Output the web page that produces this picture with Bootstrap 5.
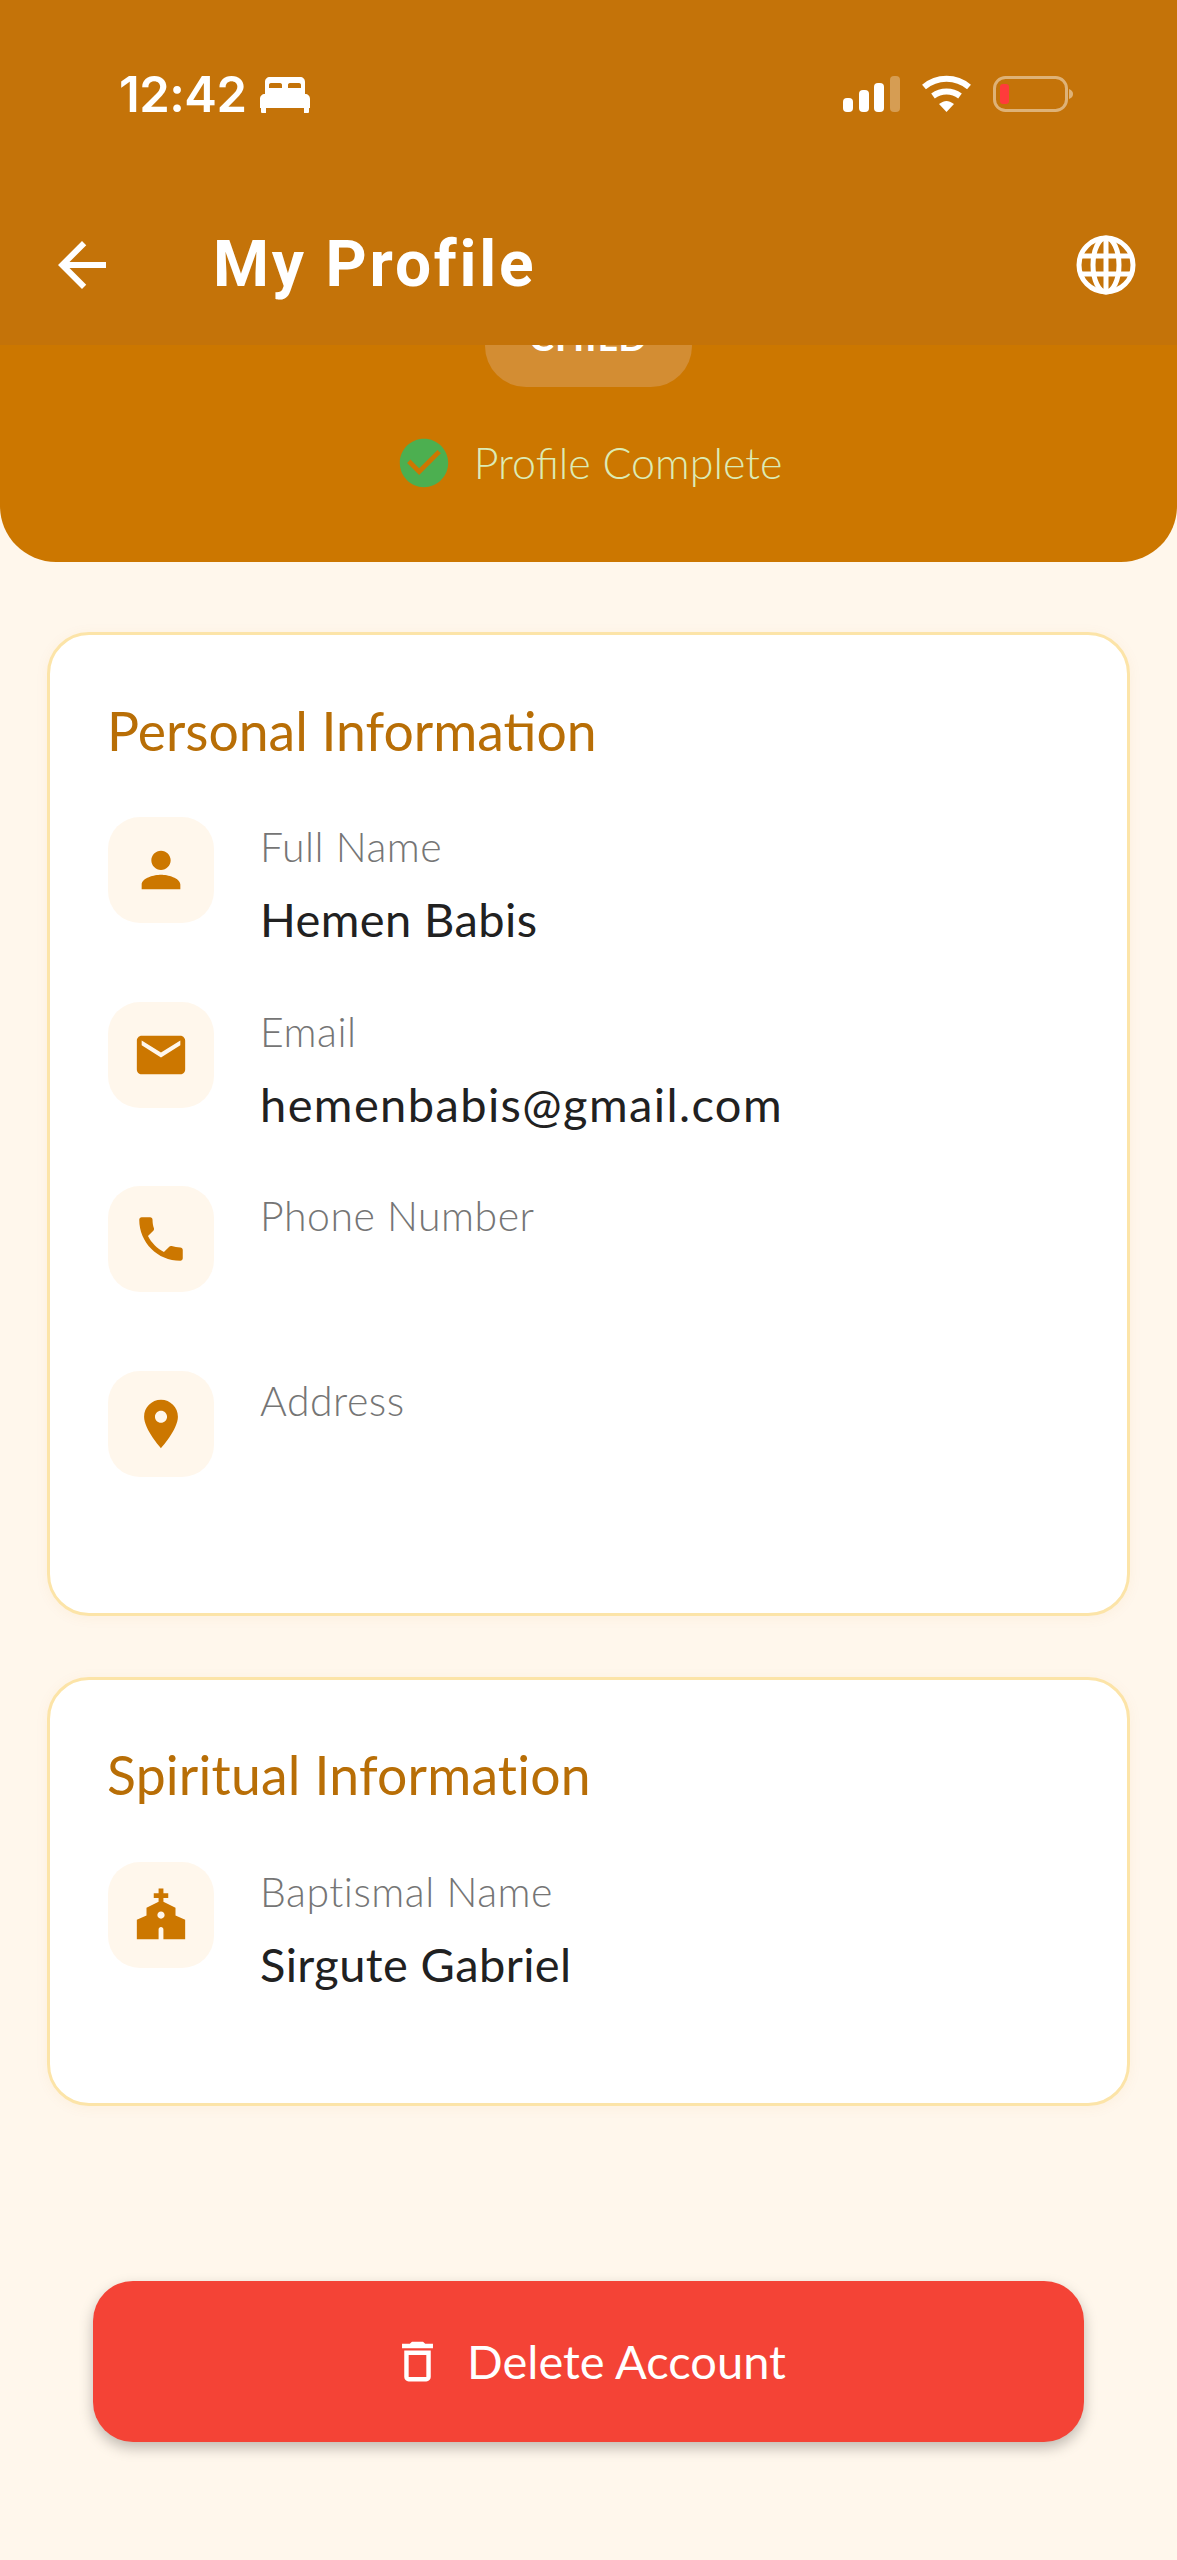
<!DOCTYPE html>
<html lang="en">
<head>
  <meta charset="UTF-8" />
  <meta name="viewport" content="width=device-width, initial-scale=1" />
  <title>My Profile</title>
  <link href="https://cdn.jsdelivr.net/npm/bootstrap@5.3.0/dist/css/bootstrap.min.css" rel="stylesheet" />
  <style>
    body {
      background: #fff7ec;
      font-family: "Lato", "Liberation Sans", sans-serif;
      width: 1177px;
      height: 2560px;
      overflow: hidden;
    }
    .top-bar {
      background: #c47309;
      height: 345px;
      color: #fff;
    }
    .status-row {
      height: 190px;
      padding: 65px 104px 0 119px;
    }
    .clock {
      font-family: "Inter", sans-serif;
      font-size: 49px;
      font-weight: 600;
      line-height: 60px;
      letter-spacing: -0.5px;
    }
    .bed-icon { width: 50px; height: 36px; margin-left: 13px; }
    .status-icons { margin-top: 10px; }
    .title-row {
      height: 155px;
      padding: 0 39px 6px 46px;
    }
    .back-icon { width: 72px; height: 72px; }
    .page-title {
      font-family: "Roboto", sans-serif;
      font-size: 64px;
      font-weight: 700;
      letter-spacing: 2.8px;
      line-height: 72px;
      margin: 0 0 0 95px;
    }
    .globe-icon { width: 64px; height: 64px; }
    .hero {
      background: #cc7700;
      height: 562px;
      border-radius: 0 0 56px 56px;
      overflow: hidden;
    }
    .role-chip {
      width: 207px;
      height: 82px;
      margin-top: -40px;
      border-radius: 41px;
      background: #d38d33;
      color: #fff;
      font-weight: 700;
      font-size: 38px;
      line-height: 62px;
      letter-spacing: 1px;
    }
    .complete-row {
      margin-top: 47px;
      color: #dcebb5;
      font-size: 43px;
      font-weight: 300;
      line-height: 58px;
    }
    .check-icon { width: 58px; height: 58px; margin-right: 21px; }
    .info-card {
      margin: 0 47px;
      background: #fff;
      border: 3px solid #fce4a8;
      border-radius: 42px;
      box-shadow: 0 2px 14px rgba(204, 119, 0, 0.06);
      padding: 59px 58px 0;
    }
    .card-one { margin-top: 70px; height: 984px; }
    .card-two { margin-top: 61px; height: 429px; }
    .card-heading {
      color: #b86e06;
      font-size: 53.500px;
      font-weight: 400;
      line-height: 72px;
      margin: 0 0 51px -1px;
    }
    .card-two .card-heading { letter-spacing: 0.2px; margin-top: -1px; margin-bottom: 52px; }
    .info-rows { gap: 78.500px; }
    .info-row { height: 106px; }
    .tile {
      width: 106px;
      height: 106px;
      border-radius: 32px;
      background: #fff7ec;
      margin-right: 46px;
    }
    .tile svg { width: 58px; height: 58px; fill: #cc7700; }
    .field-label {
      color: #757575;
      font-size: 41px;
      font-weight: 300;
      letter-spacing: 0.5px;
      line-height: 50px;
      margin-top: 5px;
    }
    .field-value {
      color: #212121;
      font-size: 47px;
      font-weight: 400;
      letter-spacing: 0.4px;
      line-height: 60px;
      margin-top: 17px;
    }
    .email-value { letter-spacing: 1.400px; }
    .delete-btn {
      display: flex;
      margin: 175px auto 0;
      width: 991px;
      height: 161px;
      background: #f44336;
      border: 0;
      border-radius: 40px;
      box-shadow: 0 6px 14px rgba(0, 0, 0, 0.25);
      color: #fff;
      font-size: 47px;
      font-weight: 400;
    }
    .delete-btn svg { width: 53px; height: 53px; fill: #fff; margin-right: 23px; }
  </style>
</head>
<body>
  <div class="hero text-center">
    <div class="top-bar sticky-top d-flex flex-column text-start">
      <div class="status-row d-flex justify-content-between align-items-start">
        <div class="d-flex align-items-center">
          <span class="clock">12:42</span>
          <svg class="bed-icon" viewBox="0 0 50 36" fill="#fff">
            <path fill-rule="evenodd" d="M10 0h30c3 0 5 2 5 5v13H5V5c0-3 2-5 5-5zm1 6c-1.500 0-2 1-2 2v3h13V8c0-1-.5-2-2-2zm19 0c-1.500 0-2 1-2 2v3h13V8c0-1-.5-2-2-2z"/>
            <path d="M5 17h40c3 0 5 2 5 5v9H0v-9c0-3 2-5 5-5zM1 31h5v5H2c-1 0-1-1-1-1zm43 0h5v4s0 1-1 1h-4z"/>
          </svg>
        </div>
        <svg class="status-icons" width="230" height="40" viewBox="0 0 230 40">
          <g fill="#fff">
            <rect x="0" y="23" width="10" height="14" rx="4"/>
            <rect x="16" y="15" width="10" height="22" rx="4"/>
            <rect x="31" y="8" width="10" height="29" rx="4"/>
          </g>
          <rect x="47" y="1" width="10" height="36" rx="4" fill="#fff" opacity=".3"/>
          <g fill="none" stroke="#fff" stroke-width="6">
            <path d="M81 12c13-11 32-11 45 0"/>
            <path d="M90 21c8-6 19-6 27 0"/>
          </g>
          <path d="M96 29c6-4 9-4 15 0l-7.500 8z" fill="#fff"/>
          <rect x="151.500" y="2.500" width="72" height="33" rx="11" fill="none" stroke="#fff" stroke-opacity=".45" stroke-width="3"/>
          <rect x="157" y="9" width="9" height="20" rx="3" fill="#ff3b3b"/>
          <path d="M226 14c3 1 4 3 4 5s-1 4-4 5z" fill="#fff" fill-opacity=".45"/>
        </svg>
      </div>
      <div class="title-row d-flex align-items-center">
        <svg class="back-icon" viewBox="0 0 24 24" fill="#fff"><path d="M20 11H7.830l5.590-5.590L12 4l-8 8 8 8 1.410-1.410L7.830 13H20v-2z"/></svg>
        <h1 class="page-title flex-grow-1">My Profile</h1>
        <svg class="globe-icon" viewBox="0 0 64 64" fill="none" stroke="#fff" stroke-width="5">
          <circle cx="32" cy="32" r="27"/>
          <ellipse cx="32" cy="32" rx="13" ry="27"/>
          <path d="M32 5v54M8 23h48M8 41h48"/>
        </svg>
      </div>
    </div>
    <div class="role-chip mx-auto">CHILD</div>
    <div class="complete-row d-flex justify-content-center align-items-center">
      <svg class="check-icon" viewBox="0 0 24 24" fill="#4caf50"><path d="M12 2C6.480 2 2 6.480 2 12s4.480 10 10 10 10-4.480 10-10S17.520 2 12 2zm-2 15l-5-5 1.410-1.410L10 14.170l7.590-7.590L19 8l-9 9z"/></svg>
      <span>Profile Complete</span>
    </div>
  </div>

  <section class="info-card card-one">
    <h2 class="card-heading">Personal Information</h2>
    <div class="info-rows d-flex flex-column">
      <div class="info-row d-flex">
        <div class="tile d-flex align-items-center justify-content-center flex-shrink-0">
          <svg viewBox="0 0 24 24"><path d="M12 12c2.210 0 4-1.790 4-4s-1.790-4-4-4-4 1.790-4 4 1.790 4 4 4zm0 2c-2.670 0-8 1.340-8 4v2h16v-2c0-2.660-5.330-4-8-4z"/></svg>
        </div>
        <div>
          <div class="field-label">Full Name</div>
          <div class="field-value">Hemen Babis</div>
        </div>
      </div>
      <div class="info-row d-flex">
        <div class="tile d-flex align-items-center justify-content-center flex-shrink-0">
          <svg viewBox="0 0 24 24"><path d="M20 4H4c-1.100 0-1.990.9-1.990 2L2 18c0 1.100.9 2 2 2h16c1.100 0 2-.9 2-2V6c0-1.100-.9-2-2-2zm0 4l-8 5-8-5V6l8 5 8-5v2z"/></svg>
        </div>
        <div>
          <div class="field-label">Email</div>
          <div class="field-value email-value">hemenbabis@gmail.com</div>
        </div>
      </div>
      <div class="info-row d-flex">
        <div class="tile d-flex align-items-center justify-content-center flex-shrink-0">
          <svg viewBox="0 0 24 24"><path d="M6.620 10.790c1.440 2.830 3.760 5.140 6.590 6.590l2.200-2.200c.27-.27.67-.36 1.020-.24 1.120.37 2.330.57 3.570.57.55 0 1 .45 1 1V20c0 .55-.45 1-1 1-9.390 0-17-7.610-17-17 0-.55.45-1 1-1h3.500c.55 0 1 .45 1 1 0 1.250.2 2.450.57 3.570.11.35.03.74-.25 1.020l-2.200 2.200z"/></svg>
        </div>
        <div>
          <div class="field-label">Phone Number</div>
        </div>
      </div>
      <div class="info-row d-flex">
        <div class="tile d-flex align-items-center justify-content-center flex-shrink-0">
          <svg viewBox="0 0 24 24"><path d="M12 2C8.130 2 5 5.130 5 9c0 5.250 7 13 7 13s7-7.750 7-13c0-3.870-3.130-7-7-7zm0 9.500c-1.380 0-2.500-1.120-2.500-2.500s1.120-2.500 2.500-2.500 2.500 1.120 2.500 2.500-1.120 2.500-2.500 2.500z"/></svg>
        </div>
        <div>
          <div class="field-label">Address</div>
        </div>
      </div>
    </div>
  </section>

  <section class="info-card card-two">
    <h2 class="card-heading">Spiritual Information</h2>
    <div class="info-row d-flex">
      <div class="tile d-flex align-items-center justify-content-center flex-shrink-0">
        <svg viewBox="0 0 24 24"><path d="M18 12.220V9l-5-2.500V5h2V3h-2V1h-2v2H9v2h2v1.500L6 9v3.220L2 14v8h9v-4c0-.55.45-1 1-1s1 .45 1 1v4h9v-8l-4-1.780zM12 13.500c-.83 0-1.500-.67-1.500-1.500s.67-1.500 1.500-1.500 1.500.67 1.500 1.500-.67 1.500-1.500 1.500z"/></svg>
      </div>
      <div>
        <div class="field-label">Baptismal Name</div>
        <div class="field-value">Sirgute Gabriel</div>
      </div>
    </div>
  </section>

  <button class="btn delete-btn align-items-center justify-content-center">
    <svg viewBox="0 0 24 24"><path d="M6 19c0 1.100.9 2 2 2h8c1.100 0 2-.9 2-2V7H6v12zM8 9h8v10H8V9zm7.500-5l-1-1h-5l-1 1H5v2h14V4h-3.500z"/></svg>
    <span>Delete Account</span>
  </button>

  <script src="https://cdn.jsdelivr.net/npm/bootstrap@5.3.0/dist/js/bootstrap.bundle.min.js"></script>
</body>
</html>
